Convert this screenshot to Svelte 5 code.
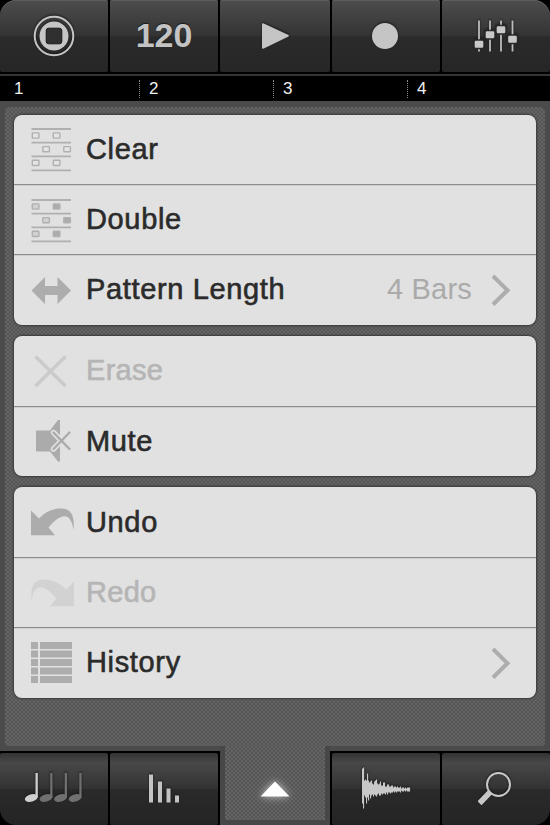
<script>
	const beats = [1, 2, 3, 4];

	const groups = [
		[
			{ icon: 'clear', label: 'Clear' },
			{ icon: 'double', label: 'Double' },
			{ icon: 'length', label: 'Pattern Length', value: '4 Bars', more: true }
		],
		[
			{ icon: 'erase', label: 'Erase', disabled: true },
			{ icon: 'mute', label: 'Mute' }
		],
		[
			{ icon: 'undo', label: 'Undo' },
			{ icon: 'redo', label: 'Redo', disabled: true },
			{ icon: 'history', label: 'History', more: true }
		]
	];

	// note positions inside the pattern icon
	const notes = [
		{ x: 0, y: 5 },
		{ x: 21, y: 5, copy: true },
		{ x: 10.5, y: 18.7 },
		{ x: 31.5, y: 18.7, copy: true },
		{ x: 0, y: 32.4 },
		{ x: 21, y: 32.4, copy: true }
	];

	const sliders = [
		{ x: 5, y: 27 },
		{ x: 16, y: 17.5 },
		{ x: 27, y: 12.5 },
		{ x: 38.5, y: 22 }
	];

	// [above, below] the centre line, one pair per pixel column
	const wave = [
		[21, 14], [22, 19], [9, 6], [10, 8], [9, 14], [16, 8], [9, 11], [7, 5], [8, 9], [9, 6],
		[6, 5], [5, 7], [8, 5], [9, 6], [10, 7], [6, 5], [5, 4], [6, 6], [8, 6], [4, 4],
		[4, 5], [7, 4], [7, 4], [3, 5], [3, 3], [5, 5], [5, 3], [3, 3], [3, 4], [4, 3],
		[4, 3], [2, 2], [3, 3], [3, 2], [2, 3], [3, 2], [2, 2], [2, 2], [3, 3], [1, 1],
		[2, 2], [2, 2], [1, 1], [2, 2], [1, 1], [2, 2], [2, 2], [2, 2]
	];
</script>

<div class="app">
	<header class="toolbar">
		<button class="key first" aria-label="Stop">
			<svg width="42" height="42" viewBox="0 0 42 42">
				<circle cx="21" cy="21" r="19.3" fill="none" stroke="#c5c5c5" stroke-width="2" />
				<circle cx="21" cy="21" r="14.5" fill="#c5c5c5" />
				<rect x="13.2" y="13.2" width="15.6" height="15.6" rx="2.5" fill="#303030" stroke="#171717" />
			</svg>
		</button>
		<button class="key tempo">120</button>
		<button class="key" aria-label="Play">
			<svg width="30" height="28" viewBox="0 0 30 28">
				<path d="M2 2.5Q2 .8 3.8 1.6L28 12.7Q29.8 13.8 28 14.8L3.8 26.5Q2 27.2 2 25.5Z" fill="#c5c5c5" />
			</svg>
		</button>
		<button class="key" aria-label="Record">
			<svg width="28" height="28" viewBox="0 0 28 28">
				<circle cx="13" cy="14" r="13" fill="#c5c5c5" />
			</svg>
		</button>
		<button class="key last" aria-label="Mixer">
			<svg width="44" height="38" viewBox="0 0 44 38">
				{#each sliders as s}
					<path d="M{s.x} 3.5V34.5" stroke="#bdbdbd" stroke-width="1.8" />
					<rect x={s.x - 5} y={s.y - 4} width="10" height="8.5" rx="2" fill="#c8c8c8" stroke="#2a2a2a" stroke-width="1.4" />
				{/each}
			</svg>
		</button>
	</header>

	<div class="ruler">
		{#each beats as beat}
			<span class="beat">{beat}</span>
		{/each}
	</div>

	<main>
		<div class="panel">
			{#each groups as group}
				<ul class="group">
					{#each group as item}
						<li class="row" class:disabled={item.disabled}>
							<span class="icon">
								<svg width="48" height="48" viewBox="0 0 48 48">
									{#if item.icon === 'clear' || item.icon === 'double'}
										<g transform="translate(4.5 2)" stroke="#b0b0b0">
											<path d="M0 2H39.5M0 15.7H39.5M0 29.4H39.5M0 43.3H39.5" stroke-width="1.8" />
											{#each notes as n}
												<rect
													x={n.x + 0.8}
													y={n.y + 0.9}
													width="6.6"
													height="5.2"
													rx="0.6"
													stroke-width="1.4"
													fill={item.icon === 'clear' ? '#e4e4e4' : n.copy ? '#acacac' : '#d0d0d0'}
												/>
											{/each}
										</g>
									{:else if item.icon === 'length'}
										<path d="M4.5 24.5L18 11V20H30.5V11L44 24.5L30.5 38V29H18V38Z" fill="#adadad" />
									{:else if item.icon === 'erase'}
										<path d="M8.5 9.5L38.5 39M38.5 9.5L8.5 39" stroke="#cbcbcb" stroke-width="3.6" />
									{:else if item.icon === 'mute'}
										<path d="M10 13.5H23L31 3H33V44.5H31L23 34.5H10Q9 34.5 9 33.5V14.5Q9 13.5 10 13.5Z" fill="#ababab" />
										<path d="M26.5 15.5L42.5 32M42.5 15.5L26.5 32" stroke="#e1e1e1" stroke-width="5.4" stroke-linecap="round" />
										<path d="M26.5 15.5L42.5 32M42.5 15.5L26.5 32" stroke="#ababab" stroke-width="2.4" stroke-linecap="round" />
									{:else if item.icon === 'undo' || item.icon === 'redo'}
										<path
											transform={item.icon === 'redo' ? 'translate(51 0) scale(-1 1)' : undefined}
											d="M4 12.5L12 20.5C20 12 30 9.8 37 10.8C44.5 12 48 19 46.3 32C45 21 41 17.5 36 18.5C30.5 19.5 26 24.5 21.5 29.5L28 37.2H4Z"
											fill={item.disabled ? '#d2d2d2' : '#acacac'}
										/>
									{:else}
										<g fill="#adadad">
											{#each [3, 11.5, 20, 28.5, 37] as y}
												<rect x="4" {y} width="7" height="7" />
												<rect x="13" {y} width="32" height="7" />
											{/each}
										</g>
									{/if}
								</svg>
							</span>
							<span class="label">{item.label}</span>
							{#if item.value}
								<span class="value">{item.value}</span>
							{/if}
							{#if item.more}
								<svg class="chevron" width="20" height="34" viewBox="0 0 20 34">
									<path d="M2 3L16.5 17.3L2 31.5" fill="none" stroke="#adadad" stroke-width="4" />
								</svg>
							{/if}
						</li>
					{/each}
				</ul>
			{/each}
		</div>
	</main>

	<nav class="tabs">
		<button class="key first" aria-label="Notes">
			<svg width="60" height="32" viewBox="0 0 60 32">
				{#each [0.8, 15.5, 30, 44.6] as x, i}
					<g transform="translate({x} 0)" fill={i === 0 ? '#cfcfcf' : '#707070'}>
						<ellipse cx="6.5" cy="25" rx="6.6" ry="3.7" transform="rotate(-16 6.5 25)" />
						<rect x="10.7" y="0" width="2.3" height="24.5" />
					</g>
				{/each}
			</svg>
		</button>
		<button class="key" aria-label="Levels">
			<svg width="31" height="30" viewBox="0 0 31 30" fill="#c3c3c3">
				<rect x="0" y="0.5" width="4" height="28" />
				<rect x="9" y="7.5" width="4" height="21" />
				<rect x="17.5" y="14.5" width="4" height="14" />
				<rect x="26" y="21.5" width="4" height="7" />
			</svg>
		</button>
		<button class="active" aria-label="Edit">
			<svg width="48" height="34" viewBox="0 0 48 34">
				<path d="M9.5 22.5L24 7.5L38.5 22.5Z" fill="#fff" />
			</svg>
		</button>
		<button class="key" aria-label="Sample">
			<svg width="50" height="44" viewBox="0 0 50 44">
				{#each wave as [up, down], i}
					<rect x={i + 1} y={22.5 - up} width="1.1" height={up + down} fill="#c8c8c8" />
				{/each}
			</svg>
		</button>
		<button class="key last" aria-label="Search">
			<svg width="36" height="36" viewBox="0 0 36 36">
				<path d="M1.5 32.3L12 21.3" stroke="#c8c8c8" stroke-width="5.6" />
				<circle cx="20.5" cy="13.5" r="11.5" fill="none" stroke="#c8c8c8" stroke-width="2" />
			</svg>
		</button>
	</nav>
</div>

<style>
	:global(body) {
		background: #000;
	}

	.app {
		width: 550px;
		height: 825px;
		display: flex;
		flex-direction: column;
		overflow: hidden;
		background: #000;
		font-family: 'Liberation Sans', Arial, sans-serif;
	}

	button {
		border: 0;
		padding: 0;
		font: inherit;
	}

	.toolbar,
	.tabs {
		display: grid;
		grid-template-columns: 108px 108px 110px 108px 108px;
		gap: 2px;
	}

	.toolbar {
		height: 72px;
	}

	.key {
		display: flex;
		align-items: center;
		justify-content: center;
		border-radius: 2px;
		background: linear-gradient(#4d4d4d, #343434 49%, #2b2b2b 51%, #262626);
		box-shadow: inset 0 1px #5d5d5d;
		color: #c3c3c3;
	}

	.key svg {
		filter: drop-shadow(0 -1px 1px #1a1a1a);
	}

	.toolbar .first {
		border-top-left-radius: 16px;
	}

	.toolbar .last {
		border-top-right-radius: 16px;
	}

	.toolbar .tempo {
		padding-bottom: 1px;
		font-size: 34px;
		font-weight: bold;
		text-shadow: 0 -1px 1px #1a1a1a;
	}

	.ruler {
		height: 25px;
		margin-top: 2px;
		border-top: 2px solid #353535;
		display: grid;
		grid-template-columns: 139px 134px 134px 1fr;
	}

	.beat {
		margin: 4px 0 3px;
		padding-left: 9px;
		border-left: 1px dotted #888;
		color: #f0f0f0;
		font-size: 17px;
		line-height: 18px;
	}

	.beat:first-child {
		border: 0;
		padding-left: 14px;
	}

	main {
		flex: 1;
		padding: 6px 5px 5px;
		background: #4b4b4b;
	}

	.panel,
	.active {
		background: repeating-conic-gradient(#646464 0 25%, #555 0 50%) 0 0 / 4px 4px;
	}

	.panel {
		height: 100%;
		box-sizing: border-box;
		padding: 7.5px 9px;
		border-radius: 5px 5px 4px 4px;
	}

	.group {
		list-style: none;
		margin: 0 0 11.5px;
		padding: 0;
		border-radius: 8px;
		background: #e1e1e1;
		box-shadow: 0 0 2px 1px #3a3a3a;
	}

	.row {
		height: 69.4px;
		padding: 0 25px 0 13px;
		display: flex;
		align-items: center;
		color: #2b2b2b;
		font-size: 29px;
	}

	.row + .row {
		border-top: 1px solid #8c8c8c;
		box-shadow: inset 0 1px #cfcfcf;
	}

	.icon {
		width: 59px;
		height: 48px;
	}

	.label {
		flex: 1;
		letter-spacing: 0.65px;
		-webkit-text-stroke: 0.6px;
	}

	.value {
		margin-right: 19px;
		letter-spacing: 0.2px;
		color: #aaa;
	}

	.disabled {
		color: #b5b5b5;
	}

	.disabled .label {
		letter-spacing: 0.3px;
	}

	.tabs {
		height: 74px;
		background: #000;
	}

	.tabs .key {
		margin-top: 2px;
		background: linear-gradient(#333, #484848 14%, #333 49%, #2a2a2a 51%, #242424);
		box-shadow: none;
	}

	.tabs .first {
		border-bottom-left-radius: 16px;
	}

	.tabs .last {
		border-bottom-right-radius: 16px;
	}

	.active {
		display: flex;
		align-items: center;
		justify-content: center;
		margin-top: -5px;
		border: solid #474747;
		border-width: 0 5px 5px;
		background-clip: padding-box;
	}

	.active svg {
		margin-top: 16px;
		filter: drop-shadow(0 0 4px #ccc);
	}
</style>
